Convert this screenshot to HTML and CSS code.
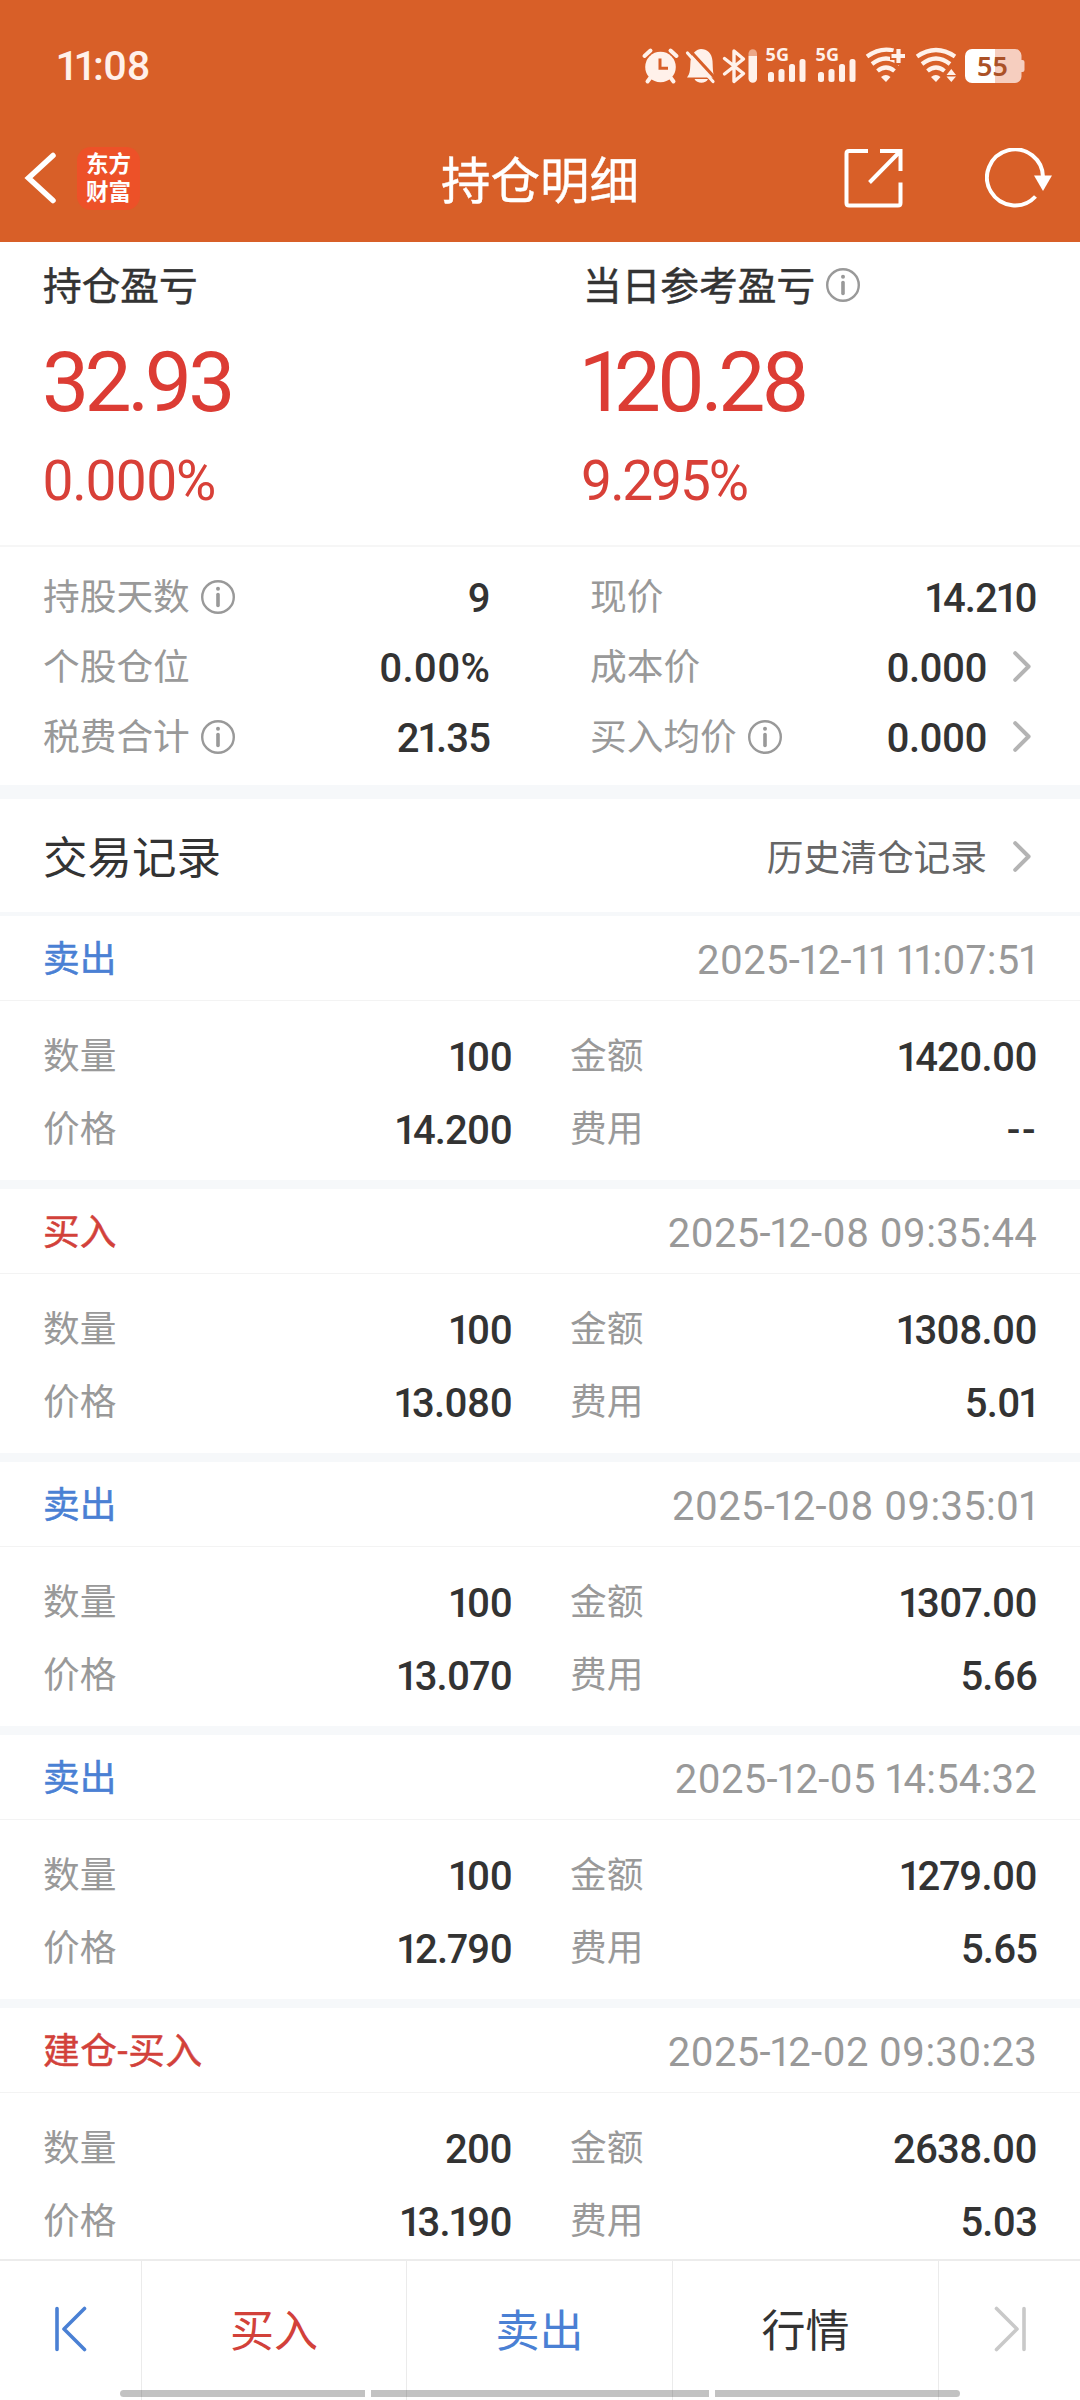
FILE: index.html
```html
<!DOCTYPE html>
<html lang="zh-CN">
<head>
<meta charset="utf-8">
<title>持仓明细</title>
<link rel="stylesheet" href="styles.css">
</head>
<body>
<svg class="defs" width="0" height="0">
  <symbol id="info" viewBox="0 0 34 34"><circle cx="17" cy="17" r="15.8" fill="none" stroke="#999" stroke-width="2.4"/><circle cx="17" cy="8.8" r="2" fill="#999"/><path d="M17 14.5V25.5" stroke="#999" stroke-width="3.6" stroke-linecap="round"/></symbol>
  <symbol id="chev" viewBox="0 0 18 31"><path d="M2.2 2.2 15.6 15.5 2.2 28.8" fill="none" stroke="#b4b4b4" stroke-width="4" stroke-linecap="round" stroke-linejoin="round"/></symbol>
</svg>
<main class="app">
  <header class="top">
    <div class="status">
      <span class="clock">11:08</span>
      <svg class="sysicons" width="386" height="60" viewBox="640 36 386 60" fill="#fff1ea">
        <g>
          <circle cx="660.5" cy="67" r="15.3"/>
          <path d="M660 58.5V68.3H668" fill="none" stroke="#d85f28" stroke-width="3"/>
          <path d="M644.5 56 650.5 50.5M676.5 56 670.500 50.5M647.5 81.5 650.5 77.5M673.5 81.5 670.5 77.5" fill="none" stroke="#fff1ea" stroke-width="4" stroke-linecap="round"/>
        </g>
        <g>
          <path d="M687 77.5C690.5 73 690 69 690.5 61C691.5 53 697 49 701 49C707 49 712 53 712.5 61C713 69 712.5 73 715 77.5ZM694.5 79H708C706 84 697 84 694.5 79Z"/>
          <path d="M688 48.500 716 79" stroke="#d85f28" stroke-width="3.2"/>
          <path d="M687.5 53 713 81.5" stroke="#fff1ea" stroke-width="3.2" stroke-linecap="round"/>
        </g>
        <path d="M724.5 58.5 743.5 73.5 734 81.5V51L743.5 59 724.5 74" fill="none" stroke="#fff1ea" stroke-width="3.4" stroke-linejoin="round" stroke-linecap="round"/>
        <path d="M748.5 56V53.5a4.200 4.200 0 0 1 8.5 0V56Z" opacity=".5"/>
        <path d="M748.5 56H757V78.500a4.200 4.200 0 0 1-8.5 0Z"/>
        <g>
          <text class="net" x="765.5" y="60.5" textLength="23.5">5G</text>
          <rect x="768" y="72" width="6" height="10" rx="2.5"/><rect x="778.5" y="69" width="6" height="13" rx="2.5"/><rect x="789" y="64" width="6" height="18" rx="2.5"/><rect x="799.5" y="59" width="6" height="23" rx="2.5"/>
        </g>
        <g>
          <text class="net" x="815.5" y="60.5" textLength="23.5">5G</text>
          <rect x="818" y="72" width="6" height="10" rx="2.5"/><rect x="828.5" y="69" width="6" height="13" rx="2.5"/><rect x="839" y="64" width="6" height="18" rx="2.5"/><rect x="849.5" y="59" width="6" height="23" rx="2.5"/>
        </g>
        <g fill="none" stroke="#fff1ea" stroke-width="4.2">
          <path d="M867 56.5Q880 47 893.5 50.500M872 64Q886 53 900 64M877.5 71Q886 64 894.5 71"/>
          <path d="M898.500 47V65M890 56H907" stroke="#d85f28" stroke-width="8"/>
          <path d="M891.500 56H905M898.5 49V63"/>
          <path d="M917 56.5Q936 43.5 955 56.5M922 64Q936 53 950 64M927.5 71Q936 64 944.5 71"/>
        </g>
        <path d="M881 77Q886 73 890.5 77L886 82ZM931 77Q936 73 940.5 77L936 82ZM946.5 75 951.3 69 956 75ZM946.5 76.5H956L951.3 82Z"/>
        <path d="M990 49H1015a6.5 6.5 0 0 1 6.5 6.5V60h1a2 2 0 0 1 2 2V70a2 2 0 0 1-2 2h-1V76.5a6.5 6.5 0 0 1-6.5 6.5H990V49Z" fill="#f6cebf"/>
        <path d="M972 49H995V83H972a7 7 0 0 1-7-7V56a7 7 0 0 1 7-7Z" fill="#fff"/>
        <text class="batt" x="977" y="76" textLength="31">55</text>
      </svg>
    </div>
    <div class="nav">
      <svg class="back" width="34" height="54" viewBox="0 0 34 54"><path d="M29 4.5 4.5 27 29 49.5" fill="none" stroke="#fff" stroke-width="5.5" stroke-linecap="round" stroke-linejoin="miter"/></svg>
      <div class="logo"><span>东方</span><span>财富</span></div>
      <h1>持仓明细</h1>
      <svg class="share" width="60" height="60" viewBox="0 0 60 60" fill="none" stroke="#fff" stroke-width="4"><path d="M24 3H5Q2.5 3 2.5 5.5V55Q2.5 57.5 5 57.5H54Q56.5 57.5 56.5 55V34.5M36 3H56.5V23M56 3.5 25.5 34.5"/></svg>
      <svg class="refresh" width="68" height="60" viewBox="0 0 68 60"><path d="M50.5 48.5A28 28 0 1 1 58 30" fill="none" stroke="#fff" stroke-width="4"/><path d="M49 27.5H67L58 43Z" fill="#fff"/></svg>
    </div>
  </header>

  <section class="profit">
    <div class="cell"><div class="cap"><span>持仓盈亏</span></div><div class="big">32.93</div><div class="pct">0.000%</div></div>
    <div class="cell"><div class="cap"><span>当日参考盈亏</span><svg class="info"><use href="#info"/></svg></div><div class="big">120.28</div><div class="pct tight">9.295%</div></div>
  </section>

  <section class="facts">
    <div class="fact"><span>持股天数</span><svg class="info"><use href="#info"/></svg><b>9</b></div>
    <div class="fact"><span>现价</span><b>14.210</b></div>
    <div class="fact"><span>个股仓位</span><b class="rate">0.00%</b></div>
    <div class="fact"><span>成本价</span><b>0.000</b><svg class="chev"><use href="#chev"/></svg></div>
    <div class="fact"><span>税费合计</span><svg class="info"><use href="#info"/></svg><b>21.35</b></div>
    <div class="fact"><span>买入均价</span><svg class="info"><use href="#info"/></svg><b>0.000</b><svg class="chev"><use href="#chev"/></svg></div>
  </section>

  <section class="trades">
    <div class="trades-head"><h2>交易记录</h2><span>历史清仓记录</span><svg class="chev"><use href="#chev"/></svg></div>

    <article class="trade">
      <div class="trade-head"><span class="sell">卖出</span><time>2025-12-11 11:07:51</time></div>
      <div class="trade-body"><span>数量</span><b>100</b><span>金额</span><b>1420.00</b><span>价格</span><b>14.200</b><span>费用</span><b class="none">--</b></div>
    </article>
    <article class="trade">
      <div class="trade-head"><span class="buy">买入</span><time>2025-12-08 09:35:44</time></div>
      <div class="trade-body"><span>数量</span><b>100</b><span>金额</span><b>1308.00</b><span>价格</span><b>13.080</b><span>费用</span><b>5.01</b></div>
    </article>
    <article class="trade">
      <div class="trade-head"><span class="sell">卖出</span><time>2025-12-08 09:35:01</time></div>
      <div class="trade-body"><span>数量</span><b>100</b><span>金额</span><b>1307.00</b><span>价格</span><b>13.070</b><span>费用</span><b>5.66</b></div>
    </article>
    <article class="trade">
      <div class="trade-head"><span class="sell">卖出</span><time>2025-12-05 14:54:32</time></div>
      <div class="trade-body"><span>数量</span><b>100</b><span>金额</span><b>1279.00</b><span>价格</span><b>12.790</b><span>费用</span><b>5.65</b></div>
    </article>
    <article class="trade">
      <div class="trade-head"><span class="buy open">建仓-买入</span><time>2025-12-02 09:30:23</time></div>
      <div class="trade-body"><span>数量</span><b>200</b><span>金额</span><b>2638.00</b><span>价格</span><b>13.190</b><span>费用</span><b>5.03</b></div>
    </article>
  </section>

  <footer class="bar">
    <div class="tab"><svg width="32" height="46" viewBox="0 0 32 46" fill="none" stroke="#4a80d4" stroke-width="3.6" stroke-linecap="round" stroke-linejoin="round"><path d="M2 2.5V43.5M29.5 2.5 9 23 29.5 43.5"/></svg></div>
    <div class="tab buy">买入</div>
    <div class="tab sell">卖出</div>
    <div class="tab">行情</div>
    <div class="tab"><svg width="32" height="46" viewBox="0 0 32 46" fill="none" stroke="#c9c9c9" stroke-width="3.6" stroke-linecap="round" stroke-linejoin="round"><path d="M30 2.5V43.5M2.5 2.5 23 23 2.5 43.5"/></svg></div>
    <div class="gesture"><i></i><i></i><i></i></div>
  </footer>
</main>
</body>
</html>
```
FILE: styles.css
```css
* { box-sizing: border-box; margin: 0; padding: 0; }
body {
  width: 1080px;
  background: #fff;
  color: #333;
  font-family: Roboto, "Noto Sans CJK SC", sans-serif;
  font-feature-settings: "pnum";
  font-size: 36.7px;
  line-height: 1;
}
.defs { display: block; position: absolute; }
svg { flex: none; display: block; }
.app { display: flex; flex-direction: column; height: 2400px; overflow: hidden; }

.top { height: 242px; background: #d85f28; color: #fff; }
.status { height: 120px; display: flex; align-items: center; justify-content: space-between; padding: 12px 54px 0 57px; }
.clock { font-size: 41px; font-weight: 500; color: #fff1ea; letter-spacing: -.8px; }
.net { font: 700 18px "Noto Sans", sans-serif; }
.batt { font: 600 27px "Noto Sans", sans-serif; fill: #ab5127; }
.nav { height: 116px; display: grid; grid-template-columns: 53px 364px 200px 203px 60px 81px 68px; align-items: center; padding-left: 24px; }
.logo { width: 63px; height: 63px; border-radius: 14px; background: #ed5128; display: flex; flex-direction: column; align-items: center; justify-content: center; font-weight: 700; font-size: 22.5px; line-height: 28px; }
h1 { font-size: 49.5px; font-weight: 400; line-height: 60px; white-space: nowrap; padding-top: 7px; -webkit-text-stroke: .4px; }
.share { grid-column: 5; }
.refresh { grid-column: 7; }

.profit { height: 305px; border-bottom: 2px solid #f6f6f6; display: grid; grid-template-columns: 540px 540px; padding-left: 43px; }
.cap { display: flex; align-items: center; height: 88px; font-size: 38.7px; -webkit-text-stroke: .5px; }
.cap span { padding-top: 3px; }
.cap .info { margin: 0 0 2px 11px; }
.info { width: 34px; height: 34px; }
.big { height: 102px; line-height: 105px; font-size: 84px; color: #dc3c34; letter-spacing: -4.6px; margin-left: -1px; }
.pct { height: 96px; line-height: 99px; font-size: 55px; color: #d84038; letter-spacing: -1.7px; margin-left: -1px; }
.tight { letter-spacing: -2.3px; margin-left: -2px; }

.facts { height: 252px; border-bottom: 14px solid #f6f8fa; padding: 15px 43px 0; display: grid; grid-template-columns: 447px 447px; grid-auto-rows: 70px; column-gap: 100px; }
.fact { display: flex; align-items: center; color: #999; }
.fact span, .fact b { padding-top: 3px; }
.fact .info { margin: 0 0 1px 11px; }
b { font-size: 40px; font-weight: 500; color: #333; letter-spacing: -.9px; }
.fact b { margin-left: auto; }
.fact .rate { letter-spacing: 0; }
.chev { width: 18px; height: 31px; margin: 0 6px 1px 26px; }

.trades { flex: 1; overflow: hidden; }
.trades-head { height: 117px; border-bottom: 4px solid #f6f8fa; display: flex; align-items: center; padding: 3px 43px 0; color: #666; }
.trades-head span { padding-top: 5px; }
h2 { font-size: 44.5px; font-weight: 400; color: #333; margin-right: auto; padding-top: 4px; }
.trade { height: 273px; border-bottom: 9px solid #f6f8fa; }
.trade-head { height: 85px; border-bottom: 1px solid #f3f3f3; display: flex; align-items: center; justify-content: space-between; padding: 5px 43px 0; -webkit-text-stroke: .5px; }
.open { letter-spacing: .6px; }
time { font-size: 40px; color: #999; letter-spacing: .25px; -webkit-text-stroke: 0; }
.trade-body { display: grid; grid-template-columns: 100px 427px 100px 367px; grid-auto-rows: 73px; align-items: center; padding: 20px 43px 0; color: #999; }
.trade-body b { text-align: right; }
.trade-body b:nth-child(4n+2) { margin-right: 58px; }
.trade-body .none { letter-spacing: 1.500px; }
.buy { color: #d2413a; }
.sell { color: #4a80d4; }

.bar { position: relative; flex: none; height: 141px; background: #fff; border-top: 2px solid #ececec; display: grid; grid-template-columns: 142px 265px 266px 266px 141px; font-size: 44px; }
.tab { display: flex; align-items: center; justify-content: center; padding-top: 2px; border-right: 1px solid #ebebeb; }
.tab svg { margin-bottom: 5px; }
.tab:nth-child(5) { border: 0; }
.gesture { position: absolute; left: 120px; bottom: 3px; width: 840px; height: 7px; display: grid; grid-template-columns: 245px 338px 245px; column-gap: 6px; border-radius: 4px; overflow: hidden; }
.gesture i { background: rgba(0, 0, 0, .24); }
```
